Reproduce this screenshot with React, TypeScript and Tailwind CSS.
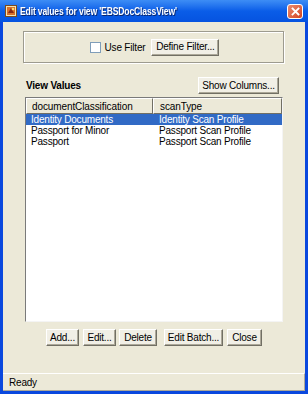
import React from "react";

const font = "font-['Liberation_Sans',Arial,sans-serif]";

const Btn = ({ children, className = "" }: { children: React.ReactNode; className?: string }) => (
  <button
    className={
      "h-[17px] flex items-center justify-center whitespace-nowrap text-[10px] tracking-[-0.2px] leading-none text-black bg-[#F1EFE6] border border-t-white border-l-white border-b-[#716F64] border-r-[#716F64] shadow-[inset_-1px_-1px_0_#ACA899] " +
      className
    }
  >
    {children}
  </button>
);

const rows = [
  ["Identity Documents", "Identity Scan Profile"],
  ["Passport for Minor", "Passport Scan Profile"],
  ["Passport", "Passport Scan Profile"],
];

export default function App() {
  return (
    <div className={`w-[308px] h-[394px] flex flex-col bg-[#0A48DE] ${font}`}>
      {/* title bar */}
      <div className="h-[22px] flex items-center bg-gradient-to-b from-[#3D8DF5] via-[#0A5DE8] to-[#0653E0] pl-[5px] pr-[5px]">
        <svg width="12" height="12" viewBox="0 0 12 12" className="shrink-0">
          <rect x="0.5" y="0.5" width="11" height="11" fill="#F4E4B0" stroke="#7A4A1E" />
          <rect x="2" y="2" width="8" height="8" fill="#D8702A" />
          <path d="M3 8 L6 3 L9 8 Z" fill="#8A2A14" />
          <circle cx="8" cy="4" r="1.3" fill="#FFD86A" />
        </svg>
        <span className="ml-[3px] whitespace-nowrap origin-left scale-x-[0.78] text-white font-bold text-[11px] tracking-[-0.2px] drop-shadow-[1px_1px_0_#0A246A]">
          Edit values for view 'EBSDocClassView'
        </span>
        <div className="ml-auto w-[16px] h-[15px] mt-[1px] rounded-[3px] border border-white bg-gradient-to-br from-[#EA8A6E] to-[#D2421C] flex items-center justify-center">
          <svg width="9" height="9" viewBox="0 0 9 9">
            <path d="M1.5 1.5 L7.5 7.5 M7.5 1.5 L1.5 7.5" stroke="white" strokeWidth="1.8" strokeLinecap="square" />
          </svg>
        </div>
      </div>

      {/* body */}
      <div className="flex-1 mx-[3px] mb-[3px] bg-[#ECE9D8] flex flex-col">
        {/* filter group */}
        <div className="mt-[9px] ml-[20px] mr-[21px] h-[32px] border border-[#9D9B8F] shadow-[inset_1px_1px_0_#fff,1px_1px_0_#fff] flex items-center justify-center">
          <div className="w-[11px] h-[11px] border border-[#7F9DB9] bg-white ml-[2px]" />
          <span className="ml-[4px] whitespace-nowrap text-[10px] tracking-[-0.2px] text-black">Use Filter</span>
          <Btn className="ml-[6px] w-[68px]">Define Filter...</Btn>
        </div>

        {/* view values header */}
        <div className="mt-[14px] flex items-center justify-between pl-[23px] pr-[26px]">
          <span className="text-[10px] tracking-[-0.2px] font-bold text-black">View Values</span>
          <Btn className="w-[81px]">Show Columns...</Btn>
        </div>

        {/* table */}
        <div className="mt-[3px] mx-[22px] h-[225px] bg-white border border-t-[#7A7A7A] border-l-[#7A7A7A] border-b-[#F4F4F4] border-r-[#F4F4F4] flex flex-col">
          <div className="flex h-[16px] text-[10px] tracking-[-0.1px] text-black whitespace-nowrap">
            <div className="w-[127px] flex items-center pl-[5px] bg-[#ECE9D8] border-t border-l border-t-white border-l-white border-b border-r border-b-[#716F64] border-r-[#716F64]">
              documentClassification
            </div>
            <div className="flex-1 flex items-center pl-[6px] bg-[#ECE9D8] border-t border-l border-t-white border-l-white border-b border-r border-b-[#716F64] border-r-[#716F64]">
              scanType
            </div>
          </div>
          {rows.map((r, i) => (
            <div
              key={i}
              className={
                "flex h-[11px] items-center whitespace-nowrap text-[10px] tracking-[-0.2px] leading-none " +
                (i === 0 ? "bg-[#316AC5] text-white" : "text-black")
              }
            >
              <div className="w-[127px] pl-[5px]">{r[0]}</div>
              <div className="flex-1 pl-[6px]">{r[1]}</div>
            </div>
          ))}
        </div>

        {/* buttons */}
        <div className="mt-[7px] flex justify-center">
          <Btn className="w-[33px]">Add...</Btn>
          <Btn className="ml-[4px] w-[33px]">Edit...</Btn>
          <Btn className="ml-[3px] w-[38px]">Delete</Btn>
          <Btn className="ml-[7px] w-[59px]">Edit Batch...</Btn>
          <Btn className="ml-[4px] w-[35px]">Close</Btn>
        </div>

        {/* status bar */}
        <div className="mt-auto h-[18px] flex items-center pl-[6px] border-t border-t-white border-b border-b-[#ACA899] border-r border-r-[#ACA899] text-[10px] tracking-[-0.2px] text-black">
          Ready
        </div>
      </div>
    </div>
  );
}
